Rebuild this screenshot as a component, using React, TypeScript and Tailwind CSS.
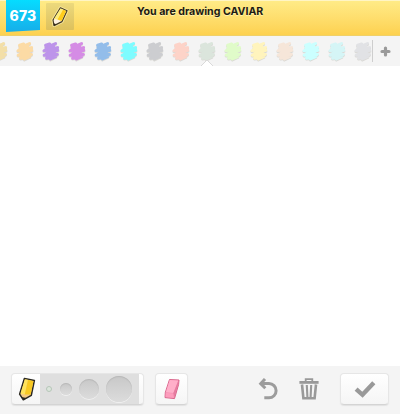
import React from 'react';

const colors = ['#f3dfa8', '#fcdba5', '#bd94ea', '#d58ce5', '#93bdea', '#7dfcff', '#cccdd0', '#fdd3c8', '#dbe5dc', '#e0fbc9', '#fff4bd', '#f6e6d9', '#cbffff', '#d5f5f6', '#e1e2e5'];

function Swatch({ color }: { color: string }) {
  const d = 'M4.6 4.2 L8.6 3 L5 6.4 L14.6 2.6 L3 9.8 L16.6 6.6 L5.4 12.6 L16.8 9.4 L3.2 14.2 L16.4 13.4 L5.6 17.2 L14.8 15.6 L9.4 18';
  return (
    <svg viewBox="0 0 20 21" className="block h-[21px] w-5" fill="none" strokeWidth="3" strokeLinecap="round" strokeLinejoin="round">
      <path d={d} stroke="#a09a90" opacity=".3" transform="translate(0 .9)" />
      <path d={d} stroke={color} />
      <path d="M6 4 L14 4 L15 15 L7 17 Z" fill={color} />
    </svg>
  );
}

function Pencil({ className }: { className: string }) {
  return (
    <svg viewBox="0 0 18 24" className={className} strokeLinejoin="round">
      <path d="M6.4 1.4 L16.4 3.4 L13.3 18.4 L5.3 22.8 L1.6 17.2 Z" fill="#f5ca83" stroke="#2a2822" strokeWidth="1.5" />
      <path d="M6.9 2.2 L10 2.8 L6.8 17.6 L2.5 16.6 Z" fill="#ffe45c" />
      <path d="M10 2.8 L15.5 4 L12.6 17.6 L6.8 17.6 Z" fill="#f8c922" />
      <path d="M3.6 20 L8.3 20.9 L5.3 22.8 Z" fill="#2a2822" />
    </svg>
  );
}

const raised = 'rounded-[4px] border border-[#e6e6e6] border-b-[#d4d4d4] bg-linear-to-b from-white to-[#f5f5f5] shadow-[0_1px_1px_#e2e2e2]';

const dot = 'shrink-0 rounded-full bg-linear-to-b from-[#c8c8c8] to-[#dcdcdc] shadow-[inset_0_1px_1px_#b8b8b8,0_1px_0_#f0f0f0]';

export default function App() {
  return (
    <div className="flex h-[414px] w-[400px] flex-col overflow-hidden bg-white font-['Inter','Noto_Sans',sans-serif]">
      <header className="grid h-9 shrink-0 grid-cols-[137px_1fr] border-t border-b border-t-[#fff5c4] border-b-[#efd06a] bg-linear-to-b from-[#ffeb87] to-[#fdd14f]">
        <div className="flex items-start pl-[6px]">
          <div className="-mt-px flex h-[32px] w-[34px] items-center justify-center bg-linear-to-b from-[#05dcff] to-[#16aee9] text-[14px] font-extrabold text-white [clip-path:polygon(0_0,100%_0,100%_94%,0_100%)]">
            <span className="-mt-px tracking-[0.1px]">673</span>
          </div>
          <div className="mt-[2px] ml-[6px] h-[27px] w-[28px] rounded-[1px] bg-linear-to-b from-[#ecd97d] to-[#dec15c] pt-[3px] pl-[5px]">
            <svg viewBox="0 0 18 21" className="h-[21px] w-[18px]" strokeLinejoin="round">
              <path d="M9.4 1.8 L16 4.8 L11 15.6 L3 19.6 L2 14 Z" fill="#fff0d8" stroke="#fae9a0" strokeWidth="3" />
              <path d="M9.4 1.8 L16 4.8 L11 15.6 L3 19.6 L2 14 Z" fill="#fff3e2" stroke="#453b22" strokeWidth="1.2" />
              <path d="M9.6 2.5 L12 3.6 L6.4 13.4 L2.9 12.9 Z" fill="#ffee7a" />
              <path d="M12 3.6 L15.2 5.1 L10.6 15 L6.4 13.4 Z" fill="#ffcd1c" />
              <path d="M2.6 17.2 L5.4 18.3 L3 19.6 Z" fill="#302716" />
            </svg>
          </div>
        </div>
        <h1 className="pt-[4px] text-[10.6px] leading-[13px] font-bold whitespace-nowrap text-[#1c1a14] [text-shadow:0_1px_0_#fff2ac]">You are drawing CAVIAR</h1>
      </header>

      <div className="flex h-[30px] shrink-0 items-center bg-[#f4f4f4]">
        <div className="flex h-full w-[373px] overflow-hidden">
          <div className="-ml-[14px] flex h-full">
            {colors.map((c, i) => (
              <div key={i} className="relative flex h-full w-[26px] shrink-0 justify-center pt-[5px]">
                <Swatch color={c} />
                {i === 8 && (
                  <svg viewBox="0 0 12 6" className="absolute bottom-0 left-[7px] h-[6px] w-3">
                    <path d="M0 6 L6 0 L12 6 Z" fill="#fff" />
                    <path d="M0 6 L6 0 L12 6" fill="none" stroke="#d9d9d9" />
                  </svg>
                )}
              </div>
            ))}
          </div>
        </div>
        <div className="-ml-px h-[22px] w-px bg-[#cecece]" />
        <svg viewBox="0 0 11 11" className="ml-[7px] h-[11px] w-[11px]">
          <path d="M5.5 2 V9 M2 5.5 H9" stroke="#9a9a9a" strokeWidth="3.2" strokeLinecap="round" />
        </svg>
      </div>

      <main className="flex-1 bg-white" />

      <footer className="flex h-12 shrink-0 items-start bg-[#f4f4f4] pt-[7px] pl-[11px]">
        <div className={`flex h-[32px] w-[133px] overflow-hidden ${raised}`}>
          <div className="flex w-7 shrink-0 items-center justify-center">
            <Pencil className="ml-[2px] h-6 w-[18px]" />
          </div>
          <div className="flex w-[99px] items-center bg-[#dfdfdf] pl-[6px]">
            <div className="h-[6px] w-[6px] shrink-0 rounded-full border border-[#b6c6b8] bg-[#dce6dc]" />
            <div className={`ml-[8px] h-3 w-3 ${dot}`} />
            <div className={`ml-[7px] h-5 w-5 ${dot}`} />
            <div className={`ml-[7px] h-[26px] w-[26px] ${dot}`} />
          </div>
        </div>
        <div className={`ml-[11px] flex h-[32px] w-[33px] items-center justify-center ${raised}`}>
          <svg viewBox="0 0 16 22" className="h-[22px] w-4" strokeLinejoin="round">
            <path d="M5.5 1.5 L15 2 L14.6 6.5 L10.5 20.6 L1 19.6 L1.3 14.5 Z" fill="#f18eb0" stroke="#d9668c" strokeWidth="1" />
            <path d="M5.7 2 L14.2 2.6 L9.4 14.9 L1.9 14.2 Z" fill="#ffafc9" />
            <path d="M14.4 2.8 L14 6.4 L10.2 19.6 L9.4 15 Z" fill="#e67b9f" />
            <path d="M1.7 14.8 L9.1 15.5 L10 20 L1.5 19.1 Z" fill="#fd9cbc" />
          </svg>
        </div>
        <svg viewBox="0 0 20 22" className="mt-[5px] ml-[70px] h-[22px] w-5" fill="none" stroke="#9c9c9c" strokeWidth="3">
          <path d="M7 1 L2.7 5.6 L7.3 10.2 M3 5.6 H11 A7 7 0 0 1 11 19.8 H6.3" />
        </svg>
        <svg viewBox="0 0 20 22" className="mt-[5px] ml-[21px] h-[22px] w-5" fill="none" stroke="#999">
          <path d="M.4 4.4 H19.6" strokeWidth="2.8" />
          <path d="M6.7 4 V1.2 H13.3 V4" strokeWidth="1.8" />
          <path d="M3 6.5 L4.4 20.3 H15.6 L17 6.5" strokeWidth="2.6" />
          <path d="M7.8 7 L8.4 19 M12.2 7 L11.6 19" strokeWidth="2.1" />
        </svg>
        <div className={`ml-[21px] flex h-[32px] w-[49px] items-center justify-center ${raised}`}>
          <svg viewBox="0 0 22 17" className="h-[17px] w-[22px]" fill="none" stroke="#999" strokeWidth="4.4">
            <path d="M2.1 8.2 L8.5 13.8 L19.8 1.8" />
          </svg>
        </div>
      </footer>
    </div>
  );
}
